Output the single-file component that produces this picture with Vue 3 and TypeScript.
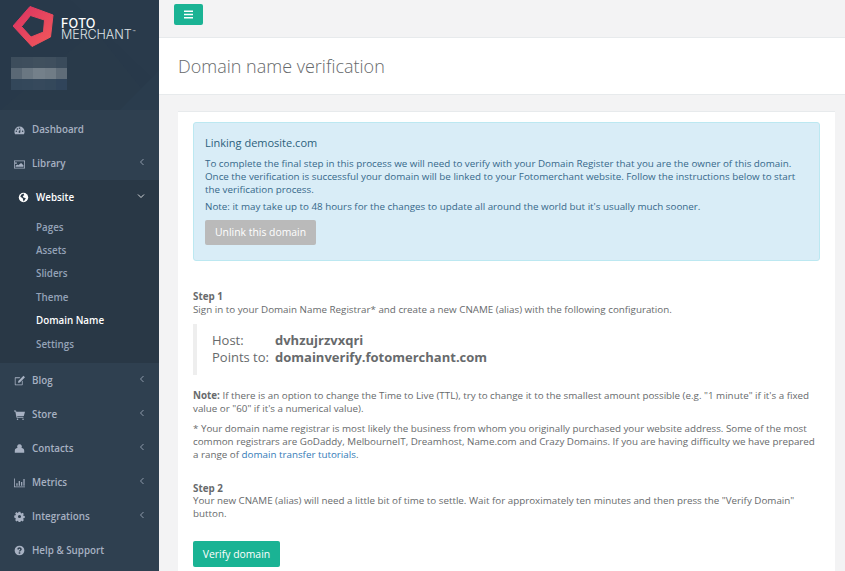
<script setup lang="ts">
interface Item { label: string; icon: string; chevron: boolean }
const before: Item[] = [
  { label: 'Dashboard', icon: 'dash', chevron: false },
  { label: 'Library', icon: 'image', chevron: true },
]
const subs = ['Pages', 'Assets', 'Sliders', 'Theme', 'Domain Name', 'Settings']
const after: Item[] = [
  { label: 'Blog', icon: 'edit', chevron: true },
  { label: 'Store', icon: 'cart', chevron: true },
  { label: 'Contacts', icon: 'user', chevron: true },
  { label: 'Metrics', icon: 'chart', chevron: true },
  { label: 'Integrations', icon: 'cog', chevron: true },
  { label: 'Help & Support', icon: 'help', chevron: false },
]
const blur = [
  '#3d4d5c', '#3e4e5d', '#40505e', '#3f4f5e', '#3a4b5b',
  '#5a6875', '#6a7782', '#74808a', '#707c86', '#5f6c78',
  '#33475a', '#34485b', '#36495c', '#34485b', '#30445a',
]
const icons: Record<string, string> = {
  dash: 'M7 2a6.500 6.500 0 0 0-6.500 6.500c0 1.200.3 2.300.9 3.200h11.200c.6-.9.9-2 .9-3.200A6.500 6.500 0 0 0 7 2zM3 9a1 1 0 1 1 0-2 1 1 0 0 1 0 2zm1.300-3a1 1 0 1 1 0-2 1 1 0 0 1 0 2zM7 5.200a1 1 0 1 1 0-2 1 1 0 0 1 0 2zm1 4.300a1.200 1.200 0 0 1-2.200-.8l2.400-3.500zM11 9a1 1 0 1 1 0-2 1 1 0 0 1 0 2z',
  image: 'M0 2h14v10H0zm1 1v8h12V3zm1.500 1a1.200 1.200 0 1 1 0 2.400 1.200 1.200 0 0 1 0-2.400zM2 10V8.500L4 7l1.500 1L9 5l3 3v2z',
  edit: 'M1.500 3H8L7 4H2v8h8V8l1-1v5.500l-.5.5h-9l-.5-.5v-9zM12 1l2 2-6.500 6.500L5 10l.5-2.500z',
  cart: 'M0 2h2.500l.5 1.500h11L12.500 9H4l.3 1H12v1.200H3.200L1.700 3.200H0zM4.500 12a1 1 0 1 1 0 2 1 1 0 0 1 0-2zm7 0a1 1 0 1 1 0 2 1 1 0 0 1 0-2z',
  user: 'M7 1.500a3 3 0 0 1 2.500 4.700c2 .5 3.500 1.500 3.500 3.800v2.500H1V10c0-2.300 1.500-3.300 3.500-3.800A3 3 0 0 1 7 1.500z',
  chart: 'M0 2h1v10h13v1H0zm3 6h1.500v3H3zm3-3h1.500v6H6zm3 1.500h1.500V11H9zm3-4h1.500V11H12z',
  cog: 'M5.800 1h2.400l.3 1.700 1 .4 1.400-1 1.700 1.700-1 1.400.4 1 1.700.3v2.400l-1.700.3-.4 1 1 1.400-1.700 1.700-1.400-1-1 .4-.3 1.700H5.800l-.3-1.700-1-.4-1.400 1-1.700-1.700 1-1.400-.4-1L.3 8.200V5.800L2 5.500l.4-1-1-1.400 1.700-1.700 1.400 1 1-.4zM7 5a2 2 0 1 0 0 4 2 2 0 0 0 0-4z',
  help: 'M7 .8a6.200 6.200 0 1 0 0 12.400A6.200 6.200 0 0 0 7 .8zM8 11H6V9.300h2zm1.800-4.800c-.2.500-.8.900-1.200 1.200-.4.300-.6.500-.6 1H6.100c0-1 .4-1.400 1-1.800.4-.3.8-.5.800-1S7.500 4.800 7 4.800c-.6 0-1 .4-1.100 1.100L4.100 5.500C4.300 4 5.400 3 7 3c1.800 0 3.200 1.300 2.800 3.200z',
}
</script>

<template>
  <div class="app">
    <aside class="sidebar">
      <div class="brand">
        <svg class="brand-bg" width="159" height="110" viewBox="0 0 159 110">
          <path d="M70 0 159 85V0Z" fill="#293a4b" />
          <path d="M0 110 95 30 159 110Z" fill="#293a4a" />
          <path d="M120 110 159 70V110Z" fill="#2a3c4d" />
        </svg>
        <div class="logo-row">
          <svg class="logo" width="42" height="42" viewBox="0 0 42 42">
            <defs>
              <linearGradient id="lg" x1="0" y1="0" x2="1" y2="1">
                <stop offset="0" stop-color="#d83262" />
                <stop offset="1" stop-color="#f4595a" />
              </linearGradient>
            </defs>
            <path d="M17 .5 40 9 37.500 31 19 40.500 0 20Z M17.500 9.500 8.500 20.500 18 31 30.500 26 31.500 14Z" fill="url(#lg)" fill-rule="evenodd" stroke="url(#lg)" stroke-width="1" stroke-linejoin="round" />
          </svg>
          <div class="wordmark">
            <span class="foto">FOTO</span>
            <span class="merchant">MERCHANT<sup>™</sup></span>
          </div>
        </div>
        <div class="blurred">
          <span v-for="(c, i) in blur" :key="i" :style="{ background: c }"></span>
        </div>
      </div>
      <nav class="nav">
        <a v-for="item in before" :key="item.label" class="nav-item">
          <svg class="ico" viewBox="0 0 14 14"><path :d="icons[item.icon]" fill-rule="evenodd" /></svg>
          <span class="lbl">{{ item.label }}</span>
          <svg v-if="item.chevron" class="chev" viewBox="0 0 6 8"><path d="M4.500 1 1.500 4l3 3" /></svg>
        </a>
        <div class="section">
          <a class="nav-item active">
            <svg class="ico" viewBox="0 0 14 14"><circle cx="7" cy="7" r="6" /><path d="M4 3.500 7 2l1 2-2 1 1 2 3 1-2 3-1 1-1-4-3-2z" fill="#293846" /></svg>
            <span class="lbl">Website</span>
            <svg class="chev down" viewBox="0 0 8 6"><path d="M1 1.500l3 3 3-3" /></svg>
          </a>
          <a v-for="s in subs" :key="s" class="sub" :class="{ current: s === 'Domain Name' }">{{ s }}</a>
        </div>
        <a v-for="item in after" :key="item.label" class="nav-item">
          <svg class="ico" viewBox="0 0 14 14"><path :d="icons[item.icon]" fill-rule="evenodd" /></svg>
          <span class="lbl">{{ item.label }}</span>
          <svg v-if="item.chevron" class="chev" viewBox="0 0 6 8"><path d="M4.500 1 1.500 4l3 3" /></svg>
        </a>
      </nav>
    </aside>
    <main class="main">
      <header class="topbar">
        <button class="menu-btn" aria-label="Menu">
          <svg width="9" height="9" viewBox="0 0 9 9"><path d="M0 .5h9v1.600H0zM0 3.700h9v1.600H0zM0 6.900h9v1.600H0z" fill="#fff" /></svg>
        </button>
      </header>
      <section class="heading"><h1>Domain name verification</h1></section>
      <div class="wrap">
        <div class="card">
          <div class="alert">
            <h4>Linking demosite.com</h4>
            <p>To complete the final step in this process we will need to verify with your Domain Register that you are the owner of this domain. Once the verification is successful your domain will be linked to your Fotomerchant website. Follow the instructions below to start the verification process.</p>
            <p class="note">Note: it may take up to 48 hours for the changes to update all around the world but it's usually much sooner.</p>
            <button class="unlink">Unlink this domain</button>
          </div>
          <div class="step1">
            <strong>Step 1</strong>
            <div>Sign in to your Domain Name Registrar* and create a new CNAME (alias) with the following configuration.</div>
          </div>
          <blockquote class="quote">
            <div class="q-row"><span class="q-key">Host:</span><b>dvhzujrzvxqri</b></div>
            <div class="q-row"><span class="q-key">Points to:</span><b>domainverify.fotomerchant.com</b></div>
          </blockquote>
          <p class="para first"><strong>Note:</strong> If there is an option to change the Time to Live (TTL), try to change it to the smallest amount possible (e.g. "1 minute" if it's a fixed value or "60" if it's a numerical value).</p>
          <p class="para second">* Your domain name registrar is most likely the business from whom you originally purchased your website address. Some of the most common registrars are GoDaddy, MelbourneIT, Dreamhost, Name.com and Crazy Domains. If you are having difficulty we have prepared a range of <a class="link">domain transfer tutorials</a>.</p>
          <div class="step2">
            <strong>Step 2</strong>
            <div>Your new CNAME (alias) will need a little bit of time to settle. Wait for approximately ten minutes and then press the "Verify Domain" button.</div>
          </div>
          <button class="verify">Verify domain</button>
        </div>
      </div>
    </main>
  </div>
</template>

<style>
html, body { margin: 0; height: 100%; overflow: hidden; }
</style>

<style scoped>
.app { display: flex; width: 845px; height: 571px; overflow: hidden; font-family: "Open Sans", sans-serif; font-size: 9.8px; line-height: 13.2px; color: #676a6c; background: #f3f3f4; }
.sidebar { width: 159px; flex: none; background: #2f4050; display: flex; flex-direction: column; }
.brand { position: relative; height: 110px; flex: none; box-sizing: border-box; padding: 7px 0 0 13px; background: #28394a; }
.brand-bg { position: absolute; left: 0; top: 0; }
.logo-row { position: relative; display: flex; align-items: center; gap: 6px; height: 40px; }
.logo { flex: none; }
.wordmark { display: flex; flex-direction: column; color: #fff; font-family: Inter, sans-serif; font-size: 12.600px; line-height: 11px; margin-top: 3px; }
.foto { font-weight: 500; letter-spacing: .1px; }
.merchant { font-weight: 300; color: #dfe3e7; letter-spacing: -.1px; }
.merchant sup { font-size: 5px; line-height: 0; vertical-align: 5px; margin-left: 1px; }
.blurred { position: relative; margin: 10px 0 0 -2px; width: 56px; display: grid; grid-template-columns: repeat(5, 1fr); grid-auto-rows: 11px; }
.nav { display: flex; flex-direction: column; padding-top: 2px; }
.nav-item { display: flex; align-items: center; height: 34px; box-sizing: border-box; padding: 2px 14px 0 14px; color: #a7b1c2; font-weight: 600; font-size: 9.8px; }
.ico { width: 11px; height: 11px; margin-right: 7px; fill: currentColor; flex: none; }
.lbl { flex: 1; }
.chev { width: 6px; height: 8px; fill: none; stroke: currentColor; stroke-width: .8; margin-top: -4px; }
.chev.down { width: 8px; height: 6px; }
.section { background: #293846; padding-bottom: 6.900px; }
.nav-item.active { color: #fff; height: 35.700px; padding: 0 14px 0 18px; }
.sub { display: block; padding-left: 36px; height: 23.400px; line-height: 23.400px; color: #95a3b8; font-weight: 600; font-size: 9.8px; }
.sub.current { color: #fff; }
.main { flex: 1; min-width: 0; display: flex; flex-direction: column; }
.topbar { height: 38px; flex: none; box-sizing: border-box; padding: 4px 15px; border-bottom: 1px solid #e7eaec; background: #f3f3f4; }
.menu-btn { width: 29px; height: 21px; padding: 0; display: flex; align-items: center; justify-content: center; background: #1ab394; border: 0; border-radius: 2px; }
.heading { height: 57px; flex: none; box-sizing: border-box; background: #fff; border-bottom: 1px solid #e7eaec; padding: 2px 19px 0; display: flex; align-items: center; }
.heading h1 { margin: 0; font-size: 18px; font-weight: 300; color: #676a6c; }
.wrap { flex: 1; padding: 16px 10px 0 19px; }
.card { background: #fff; height: 100%; box-sizing: border-box; padding: 10px 15px 0; border-top: 1px solid #e7eaec; }
.alert { height: 139px; box-sizing: border-box; padding: 13px 11px; background: #d9edf7; border: 1px solid #bce8f1; border-radius: 3px; color: #36688a; }
.alert h4 { margin: 0 0 7px; font-size: 11px; line-height: 14px; font-weight: 500; color: #2c5f7c; }
.alert p { margin: 0; }
.alert .note { margin-top: 3px; }
.unlink { margin-top: 7px; display: block; width: 111px; height: 25px; padding: 0; border: 0; border-radius: 2px; background: #bababa; color: #fff; font: 400 10.4px "Open Sans", sans-serif; }
.step1 { margin-top: 29px; }
.quote { margin: 8px 0 0; border-left: 4px solid #eee; padding: 7.500px 15px; font-size: 13px; line-height: 17.500px; height: 51px; box-sizing: border-box; }
.q-row { display: flex; }
.q-key { width: 63px; }
.q-row b { font-weight: 700; }
.para { margin: 0; }
.para.first { margin-top: 15px; line-height: 12.800px; }
.para.second { margin-top: 6px; }
.link { color: #337ab7; }
.step2 { margin-top: 21px; line-height: 12.800px; }
.verify { margin-top: 20px; display: block; width: 87px; height: 26px; padding: 0; border: 0; border-radius: 2px; background: #1ab394; color: #fff; font: 400 10.4px "Open Sans", sans-serif; }
</style>
